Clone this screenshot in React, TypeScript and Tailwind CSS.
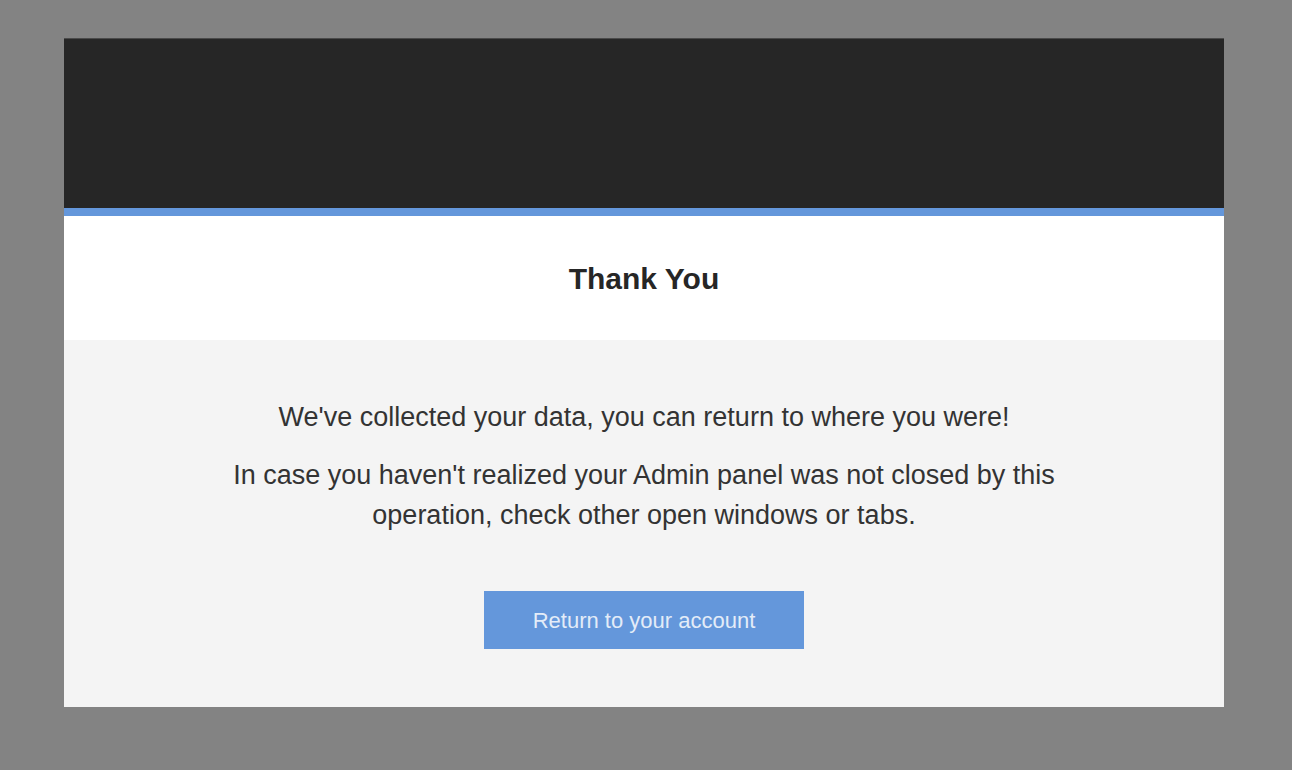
export default function App() {
  return (
    <div className="min-h-screen w-full bg-[#838383] pt-[38px] px-[64px]" style={{ fontFamily: '"Liberation Sans", Arial, sans-serif' }}>
      <div className="w-[1160px] flex flex-col">
        <div className="h-[170px] bg-[#262626] border-t border-[#4a4a4a]" />
        <div className="h-[8px] bg-[#6497db]" />
        <div className="h-[124px] bg-white flex items-center justify-center">
          <h1 className="text-[30px] leading-[36px] font-bold text-[#262626] mt-[2px]">Thank You</h1>
        </div>
        <div className="bg-[#f4f4f4] flex flex-col items-center pt-[57px] pb-[58px]">
          <p className="text-[27px] leading-[40px] text-[#333333]">We've collected your data, you can return to where you were!</p>
          <p className="mt-[18px] text-[27px] leading-[40px] text-[#333333] text-center w-[880px]">
            In case you haven't realized your Admin panel was not closed by this operation, check other open windows or tabs.
          </p>
          <button className="mt-[56px] w-[320px] h-[58px] bg-[#6497db] text-[#e3ecf8] text-[22px] font-light">Return to your account</button>
        </div>
      </div>
    </div>
  );
}
